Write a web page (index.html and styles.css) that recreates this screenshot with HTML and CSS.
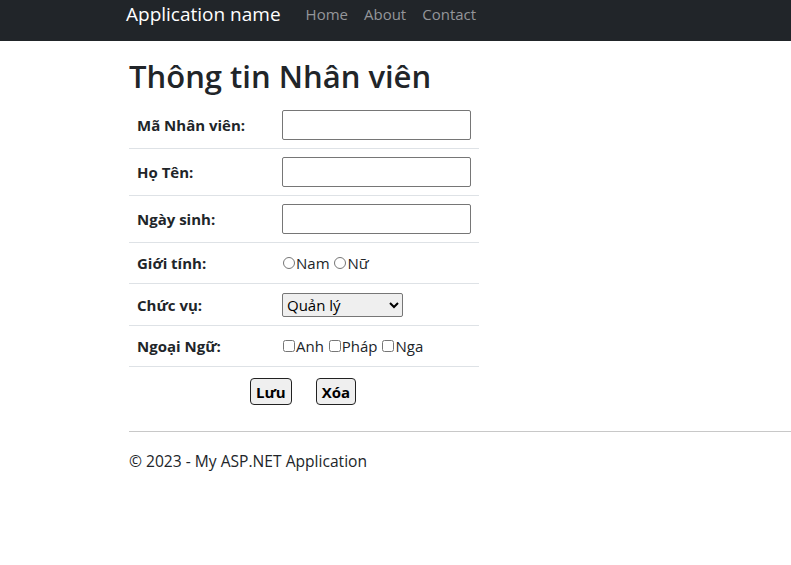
FILE: index.html
```html
<!DOCTYPE html>
<html lang="vi">
<head>
<meta charset="utf-8">
<title>Thông tin Nhân viên</title>
<link rel="stylesheet" href="styles.css">
</head>
<body>
<nav class="navbar">
  <div class="nav-inner">
    <a class="brand" href="#">Application name</a>
    <ul class="nav-links">
      <li><a href="#">Home</a></li>
      <li><a href="#">About</a></li>
      <li><a href="#">Contact</a></li>
    </ul>
  </div>
</nav>
<div class="container">
  <h2 class="title">Thông tin Nhân viên</h2>
  <table class="form-table">
    <tr>
      <td class="lbl">Mã Nhân viên:</td>
      <td><input class="txt" type="text"></td>
    </tr>
    <tr>
      <td class="lbl">Họ Tên:</td>
      <td><input class="txt" type="text"></td>
    </tr>
    <tr>
      <td class="lbl">Ngày sinh:</td>
      <td><input class="txt" type="text"></td>
    </tr>
    <tr>
      <td class="lbl">Giới tính:</td>
      <td class="opts"><label><input type="radio" name="gt">Nam</label> <label><input type="radio" name="gt">Nữ</label></td>
    </tr>
    <tr>
      <td class="lbl">Chức vụ:</td>
      <td><select class="sel"><option>Quản lý</option><option>Nhân viên</option></select></td>
    </tr>
    <tr>
      <td class="lbl">Ngoại Ngữ:</td>
      <td class="opts"><label><input type="checkbox">Anh</label> <label><input type="checkbox">Pháp</label> <label><input type="checkbox">Nga</label></td>
    </tr>
    <tr class="btn-row">
      <td colspan="2"><div class="btns"><button class="btn">Lưu</button><button class="btn">Xóa</button></div></td>
    </tr>
  </table>
  <hr class="sep">
  <footer class="footer">© 2023 - My ASP.NET Application</footer>
</div>
</body>
</html>
```
FILE: styles.css
```css
body {
  margin: 0;
  font-family: "Open Sans", "Noto Sans", sans-serif;
  color: #212529;
  font-size: 16px;
}
.navbar {
  background: #212529;
  height: 41px;
}
.nav-inner {
  display: flex;
  align-items: center;
  height: 28px;
  padding-left: 126px;
}
.brand {
  color: #fff;
  text-decoration: none;
  font-size: 19px;
  margin-right: 25px;
}
.nav-links {
  display: flex;
  gap: 16px;
  list-style: none;
  margin: 0;
  padding: 0;
}
.nav-links a {
  color: #94969a;
  text-decoration: none;
  font-size: 15px;
}
.container {
  padding-left: 129px;
}
.title {
  font-size: 31px;
  font-weight: 600;
  line-height: 1.2;
  margin: 17px 0 7px;
}
.form-table {
  border-collapse: collapse;
  width: 350px;
}
.form-table td {
  padding: 8px;
  border-bottom: 1px solid #dee2e6;
  vertical-align: middle;
}
.form-table td.lbl {
  width: 129px;
  font-weight: bold;
  font-size: 15px;
}
.opts {
  font-size: 15px;
  line-height: 24px;
}
.opts input {
  margin: 0 1px 0 1px;
  width: 12px;
  height: 12px;
}
.txt {
  width: 189px;
  height: 30px;
  box-sizing: border-box;
  border: 1px solid #767676;
  border-radius: 2px;
  margin: 0;
  display: block;
}
.sel {
  width: 121px;
  height: 24px;
  font-size: 15px;
  font-family: inherit;
  border: 1px solid #767676;
  border-radius: 2px;
  margin: 1px 0 0;
  display: block;
}
.btn-row td {
  border-bottom: none;
}
.btns {
  display: flex;
  justify-content: center;
  gap: 24px;
  padding-top: 3px;
  padding-right: 2px;
}
.btn {
  font-family: inherit;
  font-weight: bold;
  font-size: 15px;
  background: #efefef;
  border: 1px solid #222;
  border-radius: 4px;
  height: 27px;
  padding: 0 5px;
  color: #000;
}
.sep {
  margin: 18px 0 0;
  border: 0;
  border-top: 1px solid #c8c8c8;
}
.footer {
  padding-top: 18px;
  font-size: 15.6px;
}
```
